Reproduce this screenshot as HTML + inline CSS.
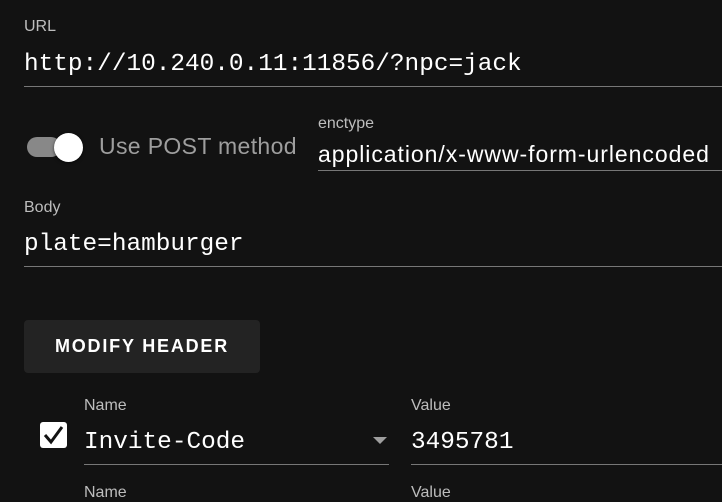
<!DOCTYPE html><html><head><style>
body{margin:0;width:722px;height:497px;background:#121212;overflow:hidden;position:relative;font-family:"Liberation Sans",sans-serif}
.a{position:absolute;white-space:nowrap}
.lbl{font-size:16px;color:#bdbdbd}
.mono{font-family:"Liberation Mono",monospace;font-size:24.4px;color:#fff}
.ln{position:absolute;height:1px;background:#777}
</style></head><body>
<div class="a lbl" style="left:24px;top:18px">URL</div>
<div class="a mono" style="left:24px;top:51px">http://10.240.0.11:11856/?npc=jack</div>
<div class="ln" style="left:24px;top:86px;width:698px"></div>

<div class="a" style="left:27px;top:137px;width:34px;height:20px;border-radius:10px;background:#888"></div>
<div class="a" style="left:54px;top:133px;width:29px;height:29px;border-radius:50%;background:#fff;box-shadow:0 1px 3px rgba(0,0,0,.6)"></div>
<div class="a" style="left:99px;top:133px;font-size:23px;color:#9e9e9e;letter-spacing:0.35px">Use POST method</div>
<div class="a lbl" style="left:318px;top:115px">enctype</div>
<div class="a" style="left:318px;top:141px;font-size:23px;color:#fff;letter-spacing:0.95px">application/x-www-form-urlencoded</div>
<div class="ln" style="left:318px;top:170px;width:404px"></div>

<div class="a lbl" style="left:24px;top:199px">Body</div>
<div class="a mono" style="left:24px;top:231px">plate=hamburger</div>
<div class="ln" style="left:24px;top:266px;width:698px"></div>

<div class="a" style="left:24px;top:320px;width:236px;height:53px;background:#232323;border-radius:4px;color:#fff;font-weight:bold;font-size:18px;letter-spacing:1.8px;line-height:53px;text-align:center">MODIFY HEADER</div>

<div class="a" style="left:40px;top:422px;width:27px;height:26px;background:#fff;border-radius:3px"></div>
<svg class="a" style="left:40px;top:422px" width="27" height="26"><path d="M5 13 L11 20 L22 5" stroke="#121212" stroke-width="3" fill="none"/></svg>
<div class="a lbl" style="left:84px;top:397px">Name</div>
<div class="a mono" style="left:84px;top:429px">Invite-Code</div>
<div class="a" style="left:373px;top:437px;width:0;height:0;border-left:7px solid transparent;border-right:7px solid transparent;border-top:7px solid #9e9e9e"></div>
<div class="ln" style="left:84px;top:464px;width:305px"></div>
<div class="a lbl" style="left:411px;top:397px">Value</div>
<div class="a mono" style="left:411px;top:429px">3495781</div>
<div class="ln" style="left:411px;top:464px;width:311px"></div>
<div class="a lbl" style="left:84px;top:484px">Name</div>
<div class="a lbl" style="left:411px;top:484px">Value</div>
</body></html>
